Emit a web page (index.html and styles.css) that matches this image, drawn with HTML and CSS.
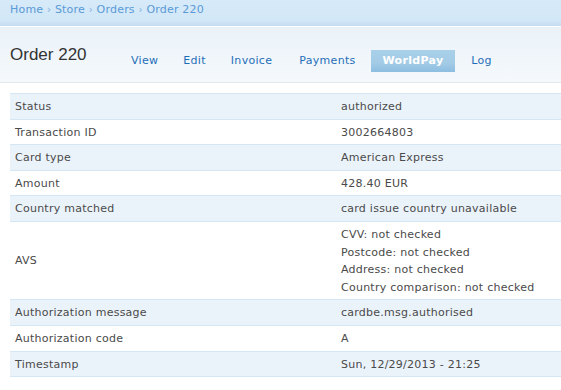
FILE: index.html
```html
<!DOCTYPE html>
<html>
  <head>
    <meta charset="utf-8">
    <title>Order 220</title>
    <link rel="stylesheet" href="styles.css">
  </head>
  <body>
    <div class="crumbs">
      <a href="#">Home</a> <span class="sep">›</span> <a href="#">Store</a> <span class="sep">›</span> <a href="#">Orders</a> <span class="sep">›</span> <a href="#">Order 220</a>
    </div>
    <div class="head">
      <h1>Order 220</h1>
      <ul class="tabs">
        <li><a href="#">View</a></li>
        <li><a href="#">Edit</a></li>
        <li><a href="#">Invoice</a></li>
        <li class="wide"><a href="#">Payments</a></li>
        <li class="active"><a href="#">WorldPay</a></li>
        <li><a href="#">Log</a></li>
      </ul>
    </div>
    <table class="info">
      <colgroup><col class="label"><col></colgroup>
      <tr class="odd"><td>Status</td><td>authorized</td></tr>
      <tr><td>Transaction ID</td><td>3002664803</td></tr>
      <tr class="odd"><td>Card type</td><td>American Express</td></tr>
      <tr><td>Amount</td><td>428.40 EUR</td></tr>
      <tr class="odd"><td>Country matched</td><td>card issue country unavailable</td></tr>
      <tr><td>AVS</td><td>CVV: not checked<br>Postcode: not checked<br>Address: not checked<br>Country comparison: not checked</td></tr>
      <tr class="odd"><td>Authorization message</td><td>cardbe.msg.authorised</td></tr>
      <tr><td>Authorization code</td><td>A</td></tr>
      <tr class="odd"><td>Timestamp</td><td>Sun, 12/29/2013 - 21:25</td></tr>
    </table>
  </body>
</html>
```

FILE: styles.css
```css
*{
  margin: 0;
  padding: 0;
}
body{
  background: #fff;
  font-family: "DejaVu Sans", Verdana, sans-serif;
  font-size: 11px;
  color: #4a4a4a;
}
a{
  text-decoration: none;
}
.crumbs{
  height: 26px;
  line-height: 20px;
  padding-left: 10px;
  background: linear-gradient(#d6eaf9, #d2e7f7 80%, #c4dcf1);
  border-bottom: 1px solid #fff;
  color: #7fb0dc;
  letter-spacing: 0.2px;
}
.crumbs a{
  color: #5a9ad6;
}
.crumbs .sep{
  font-size: 10px;
}
.head{
  display: flex;
  align-items: center;
  height: 55px;
  padding: 0 10px;
  background: linear-gradient(#eaf2f9, #f5f9fc);
  border-bottom: 1px solid #e3e8ed;
}
.head h1{
  font-family: "Liberation Sans", Arial, sans-serif;
  font-weight: normal;
  font-size: 17px;
  color: #333;
  width: 109px;
}
.tabs{
  list-style: none;
  display: flex;
  gap: 1px;
  margin-top: 12px;
}
.tabs li a{
  display: block;
  padding: 0 12px;
  height: 22px;
  line-height: 22px;
  color: #1f6fb8;
  letter-spacing: 0.3px;
}
.tabs li.wide{
  margin-left: 2px;
}
.tabs li.active{
  margin: 0 3px 0 2px;
}
.tabs li.active a{
  background: linear-gradient(#a9d0e9, #a3cbe6 60%, #8dbde0);
  color: #fff;
  font-weight: bold;
  padding: 0 12px;
}
.info{
  margin: 10px 0 0 10px;
  width: 551px;
  table-layout: fixed;
  border-collapse: collapse;
  border-top: 1px solid #d4e5f4;
}
.info col.label{
  width: 326px;
}
.info td{
  padding: 4px 5px 3px 5px;
  line-height: 17.6px;
  letter-spacing: 0.25px;
  border-bottom: 1px solid #d4e5f4;
  vertical-align: middle;
}
.info tr.odd td{
  background: #ebf3fa;
}
```
